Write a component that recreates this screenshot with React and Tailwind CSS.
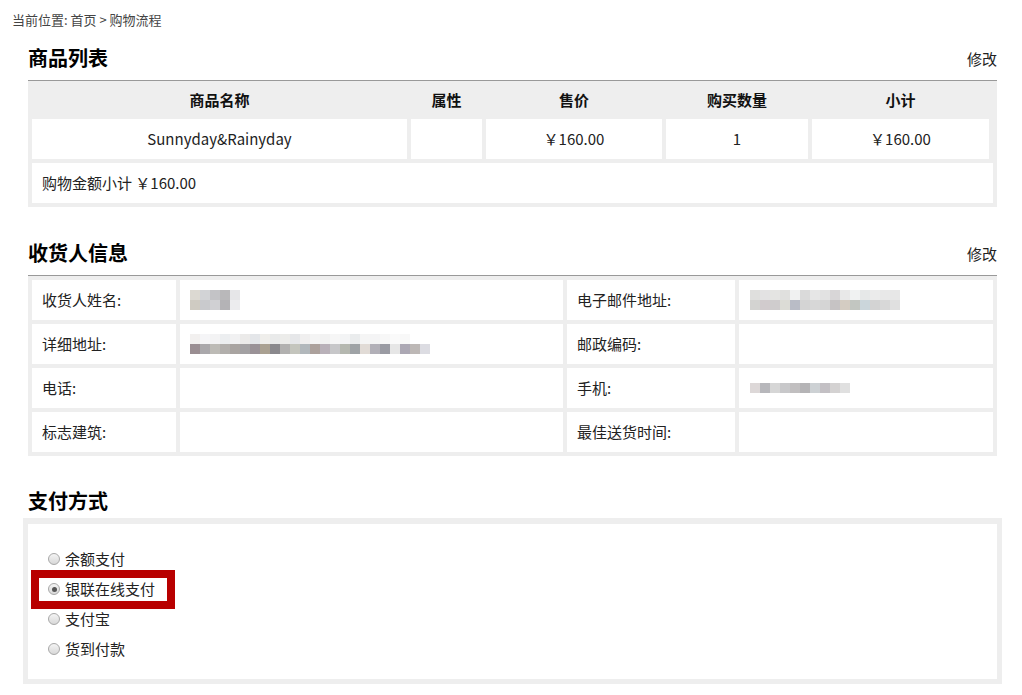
import React from 'react'

const goods = [{ name: 'Sunnyday&Rainyday', attr: '', price: '￥160.00', qty: '1', subtotal: '￥160.00' }]

const mosaics = {
  name: [
    ['#dcd9d2', '#d2d3d6', '#c3c3c6', '#b9b8ba', '#e6e6e8'],
    ['#cfcbc2', '#c9cacd', '#d0d0d3', '#b4b3b6', '#ececee'],
  ],
  address: [
    ['#f2f0ef', '#f5f5f7', '#f3f3f4', '#eceef0', '#f1f1f2', '#ebeae9', '#e4e6e9', '#efeeeb', '#e9eaea', '#ececea', '#e6e7e9', '#f0efef', '#f4f4f4', '#f2f2f2', '#f6f6f6', '#f3f4f5', '#eaeced', '#f5f5f5', '#f4f4f5', '#f7f7f7', '#fafafa', '#f8f8f8', '#ffffff', '#ffffff'],
    ['#9a8e92', '#aaa8ab', '#bdbbb6', '#b2afac', '#a9a4a1', '#a3a1a3', '#9a9297', '#aaa192', '#8a898d', '#b2b1b0', '#c4c5bd', '#b2b8bc', '#aca19c', '#b9b1b9', '#c7c7c9', '#b5b8b0', '#9fa3a6', '#e1dbd6', '#b2b0b8', '#9a9ba3', '#e6e6e6', '#aca8b4', '#bdb8b6', '#dcdce2'],
  ],
  email: [
    ['#dfdfdd', '#e3e2e3', '#e4e4e2', '#e0e0de', '#f0f1f1', '#dadada', '#e6e6e6', '#e2e2e2', '#d8d6d7', '#e8e8e8', '#f0f2f2', '#e6e8e8', '#ebebeb', '#e8e8e8', '#e7e7e7'],
    ['#d3d3d1', '#d1cbcd', '#cfcccd', '#dcdcd6', '#b9bcc6', '#d4d4d4', '#d7d7d7', '#d5d5d5', '#c6c3c4', '#d4ccc2', '#c2c6c1', '#cbd6db', '#d3d3d3', '#d8d8d8', '#e0e0e0'],
  ],
  mobile: [
    ['#ddd8d8', '#b7b7bb', '#d6d6d6', '#c8c8ca', '#c1bfc0', '#b5b4b6', '#cdd1d4', '#c3c0c4', '#d4d2d2', '#e0e0e0'],
  ],
}

function Mosaic({ rows }) {
  return (
    <div className="flex flex-col blur-[0.6px]">
      {rows.map((row, i) => (
        <div key={i} className="flex">
          {row.map((c, j) => (
            <div key={j} className="w-[10px] h-[10px]" style={{ backgroundColor: c }} />
          ))}
        </div>
      ))}
    </div>
  )
}

function SectionHead({ title, edit }) {
  return (
    <div className="h-[45px] flex items-center justify-between border-b border-[#999]">
      <h2 className="text-[20px] font-bold text-black leading-none">{title}</h2>
      {edit && <a className="text-[15px] text-[#222] leading-none">修改</a>}
    </div>
  )
}

function Radio({ checked }) {
  return (
    <span className="w-[12px] h-[12px] rounded-full border border-[#a8a8a8] bg-gradient-to-b from-[#f4f4f4] to-[#d8d8d8] flex items-center justify-center shrink-0">
      {checked && <span className="w-[5px] h-[5px] rounded-full bg-[#555]" />}
    </span>
  )
}

function App() {
  const payments = ['余额支付', '银联在线支付', '支付宝', '货到付款']

  return (
    <div className="min-h-screen bg-white text-[#333] font-['Noto_Sans_CJK_SC','Noto_Sans',sans-serif]">
      <div className="h-[36px] pt-[11px] pl-[12px] text-[13px] leading-[18px] text-[#444]">
        当前位置: 首页 &gt; 购物流程
      </div>

      <div className="pl-[28px] pr-[25px]">
        <SectionHead title="商品列表" edit />
        <div className="bg-[#eee] p-[4px] flex flex-col gap-[4px]">
          <div className="grid grid-cols-[375px_71px_176px_142px_177px] gap-[4px] h-[30px] items-center text-[15px] font-bold text-[#111] text-center">
            <div>商品名称</div>
            <div>属性</div>
            <div>售价</div>
            <div>购买数量</div>
            <div>小计</div>
          </div>
          {goods.map((g) => (
            <div key={g.name} className="grid grid-cols-[375px_71px_176px_142px_177px] gap-[4px] text-[15px] text-[#222] text-center">
              <div className="bg-white h-[40px] flex items-center justify-center">{g.name}</div>
              <div className="bg-white h-[40px] flex items-center justify-center">{g.attr}</div>
              <div className="bg-white h-[40px] flex items-center justify-center">{g.price}</div>
              <div className="bg-white h-[40px] flex items-center justify-center">{g.qty}</div>
              <div className="bg-white h-[40px] flex items-center justify-center">{g.subtotal}</div>
            </div>
          ))}
          <div className="bg-white h-[40px] flex items-center pl-[10px] text-[15px] text-[#222]">
            购物金额小计 ￥160.00
          </div>
        </div>

        <div className="mt-[24px]">
          <SectionHead title="收货人信息" edit />
        </div>
        <div className="bg-[#eee] p-[4px] grid grid-cols-[144px_383px_168px_254px] gap-[4px] text-[15px] text-[#222]">
          <div className="bg-white h-[40px] flex items-center pl-[10px]">收货人姓名:</div>
          <div className="bg-white h-[40px] flex items-center pl-[10px]">
            <Mosaic rows={mosaics.name} />
          </div>
          <div className="bg-white h-[40px] flex items-center pl-[10px]">电子邮件地址:</div>
          <div className="bg-white h-[40px] flex items-center pl-[11px]">
            <Mosaic rows={mosaics.email} />
          </div>

          <div className="bg-white h-[40px] flex items-center pl-[10px]">详细地址:</div>
          <div className="bg-white h-[40px] flex items-center pl-[10px]">
            <Mosaic rows={mosaics.address} />
          </div>
          <div className="bg-white h-[40px] flex items-center pl-[10px]">邮政编码:</div>
          <div className="bg-white h-[40px]"></div>

          <div className="bg-white h-[40px] flex items-center pl-[10px]">电话:</div>
          <div className="bg-white h-[40px]"></div>
          <div className="bg-white h-[40px] flex items-center pl-[10px]">手机:</div>
          <div className="bg-white h-[40px] flex items-center pl-[11px]">
            <Mosaic rows={mosaics.mobile} />
          </div>

          <div className="bg-white h-[40px] flex items-center pl-[10px]">标志建筑:</div>
          <div className="bg-white h-[40px]"></div>
          <div className="bg-white h-[40px] flex items-center pl-[10px]">最佳送货时间:</div>
          <div className="bg-white h-[40px]"></div>
        </div>

        <div className="mt-[28px] h-[34px] flex items-center">
          <h2 className="text-[20px] font-bold text-black leading-none">支付方式</h2>
        </div>
      </div>

      <div className="ml-[23px] mr-[20px] border-[5px] border-t-[6px] border-[#eee] bg-white pt-[20px] pb-[15px] pl-[20px] relative">
        {payments.map((p, i) => (
          <label key={p} className="h-[30px] flex items-center gap-[5px] text-[15px] text-[#222]">
            <Radio checked={i === 1} />
            <span>{p}</span>
          </label>
        ))}
        <div className="absolute left-[3px] top-[46px] w-[144px] h-[39px] border-[8px] border-[#b80000] pointer-events-none" />
      </div>
    </div>
  )
}

export default App
